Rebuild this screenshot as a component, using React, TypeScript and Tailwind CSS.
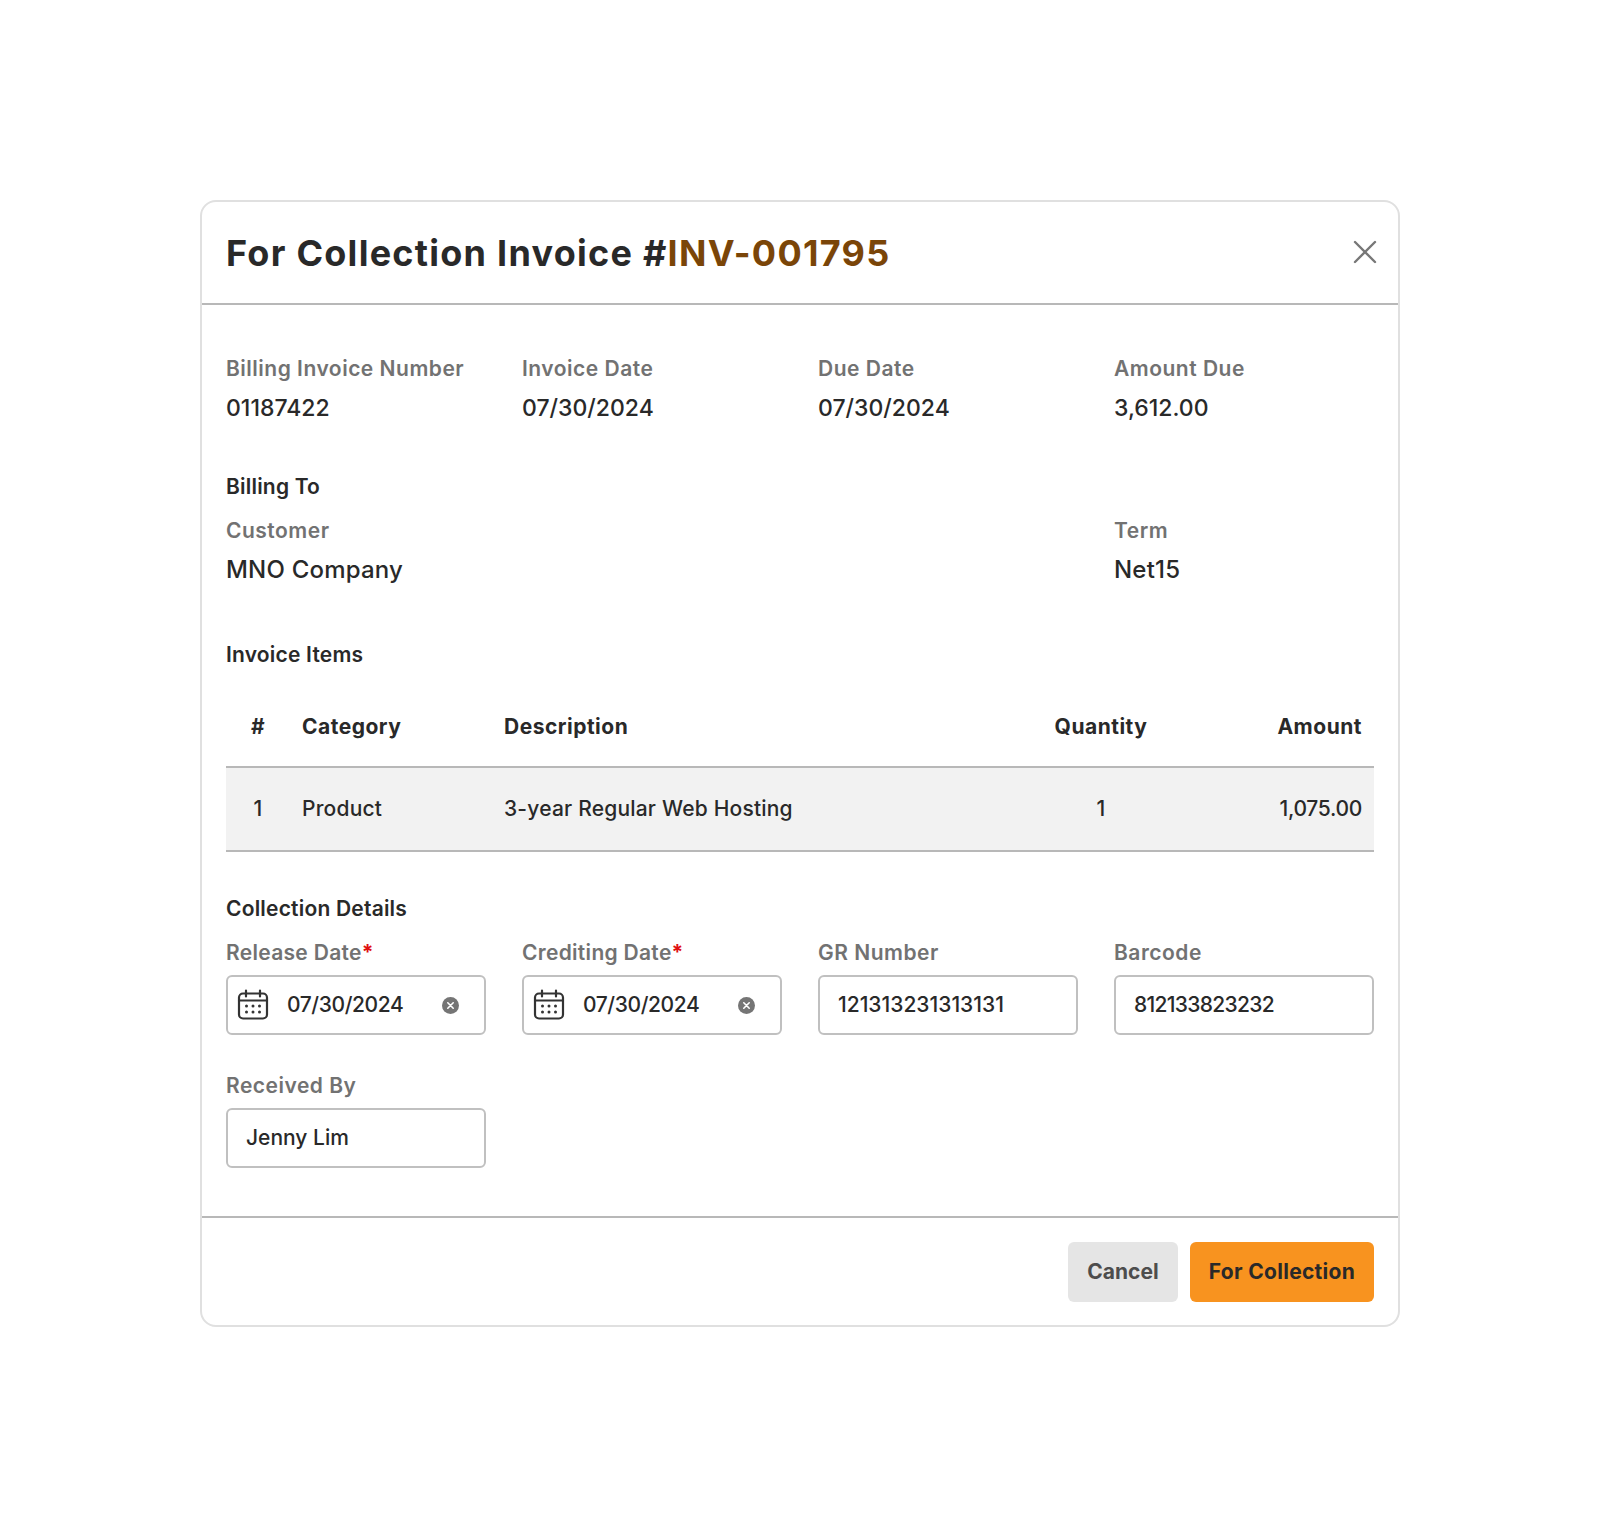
import type { ReactNode } from 'react';

const FONT = "font-['Inter','Liberation_Sans',sans-serif]";

function Info({ label, value, big }: { label: string; value: string; big?: boolean }) {
  return (
    <div>
      <p className="text-[21px] leading-[26px] font-semibold text-[#727272] tracking-[0.5px]">{label}</p>
      <p className={`mt-[13px] leading-[26px] font-medium text-[#292929] ${big ? 'text-[24px] tracking-[0.2px]' : 'text-[23px]'}`}>{value}</p>
    </div>
  );
}

function CalendarIcon() {
  return (
    <svg width="32" height="32" viewBox="0 0 32 32" fill="none" stroke="#333" strokeWidth="2.2" strokeLinecap="round" className="shrink-0">
      <rect x="2" y="4.5" width="28" height="25" rx="4" />
      <path d="M2 11.5h28M9 1.5v6M23 1.5v6" />
      <g fill="#333" stroke="none">
        <circle cx="9.5" cy="17" r="1.5" />
        <circle cx="16" cy="17" r="1.5" />
        <circle cx="22.5" cy="17" r="1.5" />
        <circle cx="9.5" cy="23" r="1.5" />
        <circle cx="16" cy="23" r="1.5" />
        <circle cx="22.5" cy="23" r="1.5" />
      </g>
    </svg>
  );
}

function ClearIcon() {
  return (
    <svg width="17" height="17" viewBox="0 0 17 17" className="shrink-0">
      <circle cx="8.5" cy="8.5" r="8.5" fill="#757575" />
      <path d="M5.8 5.8l5.4 5.4M11.2 5.8l-5.4 5.4" stroke="#fff" strokeWidth="1.6" strokeLinecap="round" />
    </svg>
  );
}

function DateField({ label, value }: { label: string; value: string }) {
  return (
    <div>
      <p className="text-[21px] leading-[26px] font-semibold tracking-[0.3px] text-[#727272]">
        {label}
        <span className="text-[#e01010] font-bold">*</span>
      </p>
      <div className="mt-[9px] h-[60px] rounded-[6px] border-2 border-[#c0c0c0] flex items-center pl-[9px] pr-[25px]">
        <CalendarIcon />
        <span className="ml-[18px] flex-1 text-[21px] font-medium tracking-[-0.4px] text-[#292929]">{value}</span>
        <ClearIcon />
      </div>
    </div>
  );
}

function TextField({ label, value }: { label: string; value: ReactNode }) {
  return (
    <div>
      <p className="text-[21px] leading-[26px] font-semibold tracking-[0.5px] text-[#727272]">{label}</p>
      <div className="mt-[9px] h-[60px] rounded-[6px] border-2 border-[#c0c0c0] flex items-center px-[18px] text-[21px] font-medium text-[#292929]">
        {value}
      </div>
    </div>
  );
}

export default function App() {
  return (
    <div className={`min-h-[1527px] bg-white pt-[200px] ${FONT}`}>
      <div className="mx-auto w-[1200px] rounded-[16px] border-2 border-[#e0e0e0] bg-white">
        <div className="h-[103px] border-b-2 border-[#b8b8b8] pl-[24px] pr-[21px] flex items-center justify-between">
          <h1 className="text-[36px] font-bold tracking-[1.26px] text-[#292929]">
            For Collection Invoice #<span className="text-[#7a4508]">INV-001795</span>
          </h1>
          <svg width="24" height="24" viewBox="0 0 24 24" stroke="#777" strokeWidth="2.4" fill="none" strokeLinecap="round" className="mb-[1px]">
            <path d="M2 2l20 20M22 2L2 22" />
          </svg>
        </div>

        <div className="px-[24px] pt-[51px] pb-[48px]">
          <div className="grid grid-cols-4 gap-x-[36px]">
            <Info label="Billing Invoice Number" value="01187422" />
            <Info label="Invoice Date" value="07/30/2024" />
            <Info label="Due Date" value="07/30/2024" />
            <Info label="Amount Due" value="3,612.00" />
          </div>

          <p className="mt-[53px] text-[21px] leading-[26px] font-semibold tracking-[0.2px] text-[#292929]">Billing To</p>
          <div className="mt-[18px] grid grid-cols-4 gap-x-[36px]">
            <div className="col-span-3">
              <Info label="Customer" value="MNO Company" big />
            </div>
            <Info label="Term" value="Net15" big />
          </div>

          <p className="mt-[59px] text-[21px] leading-[26px] font-semibold tracking-[0.2px] text-[#292929]">Invoice Items</p>

          <table className="mt-[27px] w-full border-collapse text-[21px] font-medium tracking-[0.2px] text-[#292929]">
            <thead>
              <tr className="h-[72px] border-b-2 border-[#b8b8b8] tracking-[0.5px]">
                <th className="w-[64px] pb-[8px] font-bold text-center">#</th>
                <th className="w-[214px] pb-[8px] pl-[12px] font-bold text-left">Category</th>
                <th className="pb-[8px] font-bold text-left">Description</th>
                <th className="w-[170px] pb-[8px] font-bold text-center">Quantity</th>
                <th className="w-[188px] pb-[8px] pr-[12px] font-bold text-right">Amount</th>
              </tr>
            </thead>
            <tbody>
              <tr className="h-[84px] bg-[#f2f2f2] border-b-2 border-[#b8b8b8]">
                <td className="text-center">1</td>
                <td className="pl-[12px]">Product</td>
                <td>3-year Regular Web Hosting</td>
                <td className="text-center">1</td>
                <td className="pr-[12px] text-right tracking-[-0.3px]">1,075.00</td>
              </tr>
            </tbody>
          </table>

          <p className="mt-[44px] text-[21px] leading-[26px] font-semibold tracking-[0.2px] text-[#292929]">Collection Details</p>
          <div className="mt-[18px] grid grid-cols-4 gap-x-[36px] gap-y-[38px]">
            <DateField label="Release Date" value="07/30/2024" />
            <DateField label="Crediting Date" value="07/30/2024" />
            <TextField label="GR Number" value="121313231313131" />
            <TextField label="Barcode" value={<span className="tracking-[-0.7px]">812133823232</span>} />
            <TextField label="Received By" value="Jenny Lim" />
          </div>
        </div>

        <div className="border-t-2 border-[#b8b8b8] pl-[24px] pr-[24px] pt-[24px] pb-[23px] flex justify-end gap-[12px]">
          <button className="h-[60px] w-[110px] rounded-[6px] bg-[#e5e5e5] text-[21px] font-bold text-[#4d4d4d]">Cancel</button>
          <button className="h-[60px] w-[184px] rounded-[6px] bg-[#f8931f] text-[21px] font-bold tracking-[0.3px] text-[#292929]">For Collection</button>
        </div>
      </div>
    </div>
  );
}
